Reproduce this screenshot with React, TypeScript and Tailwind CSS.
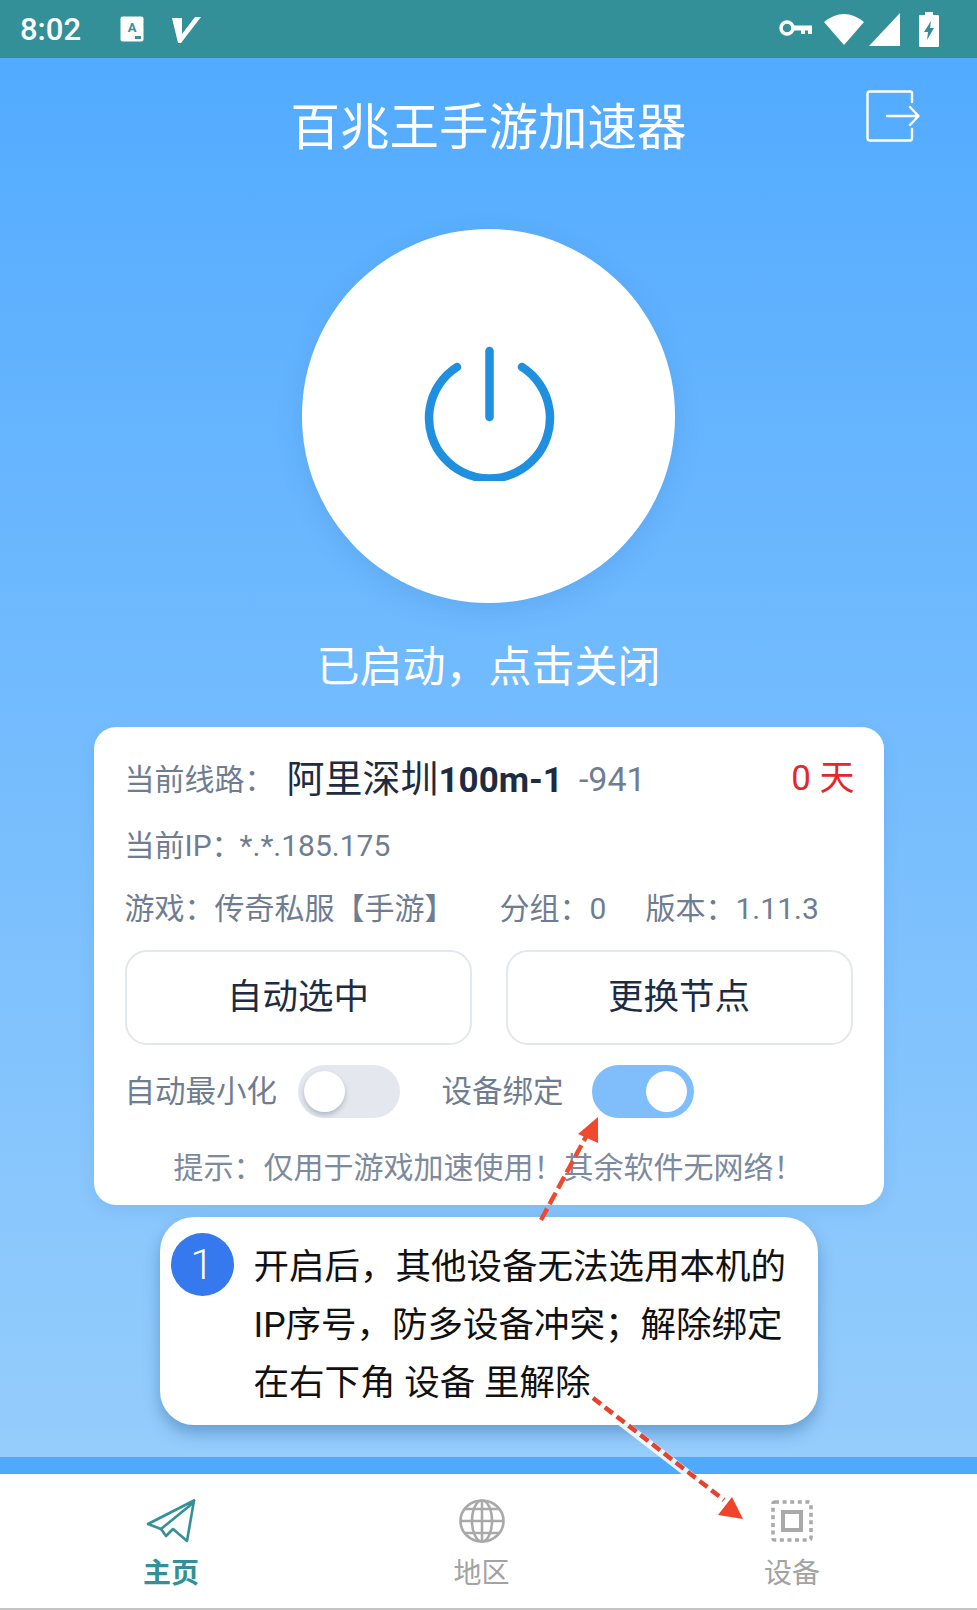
import React from "react";

const font = { fontFamily: '"Roboto","Noto Sans CJK SC",sans-serif' };

function Toggle({ on }: { on?: boolean }) {
  return (
    <div className={`flex items-center w-[102px] h-[53px] rounded-full px-[6px] ${on ? "bg-[#7fbdfb] justify-end pr-[7px]" : "bg-[#e4e7ee] justify-start"}`}>
      <div className={`w-[41px] h-[41px] rounded-full bg-white ${on ? "" : "shadow-[0_3px_5px_rgba(90,100,120,0.35)]"}`} />
    </div>
  );
}

function StatusBar() {
  return (
    <div className="relative flex items-center h-[58px] bg-[#338f98] text-white shrink-0">
      <span className="ml-[20px] w-[100px] text-[31px] font-medium leading-none tracking-[0px]" style={{ fontFamily: "Roboto,sans-serif" }}>8:02</span>
      <svg width="24" height="26" viewBox="0 0 24 26" className="ml-0">
        <rect x="0.5" y="0.5" width="23" height="25" rx="2" fill="#fff" />
        <text x="12" y="16" textAnchor="middle" fontSize="13" fontWeight="700" fill="#338f98" fontFamily="Roboto">A</text>
        <rect x="15" y="20" width="6" height="3" fill="#338f98" />
      </svg>
      <svg width="30" height="27" viewBox="0 0 30 27" className="ml-[27px]">
        <path d="M1 2 L11 2 L11 18 L24 1 L30 1 L10 27 L7 27 Z" fill="#fff" />
      </svg>
      <div className="flex-1" />
      <svg width="34" height="20" viewBox="0 0 34 20">
        <circle cx="8" cy="9" r="6" fill="none" stroke="#fff" strokeWidth="3.5" />
        <path d="M14 6.5 H33 V15 H29 V11.5 H26 V15 H22 V11.5 H14 Z" fill="#fff" />
      </svg>
      <svg width="42" height="32" viewBox="0 0 42 32" className="ml-[10px]">
        <path d="M1 9 Q21 -7 41 9 L21 32 Z" fill="#fff" />
      </svg>
      <svg width="32" height="33" viewBox="0 0 32 33" className="ml-[4px]">
        <path d="M31 0 V33 H0 Z" fill="#fff" />
      </svg>
      <svg width="20" height="35" viewBox="0 0 20 35" className="ml-[18px] mr-[38px]">
        <path d="M6 0 H14 V3 H19 Q20 3 20 4 V34 Q20 35 19 35 H1 Q0 35 0 34 V4 Q0 3 1 3 H6 Z" fill="#fff" />
        <path d="M12 9 L5 20 H9 L8 28 L15 16 H11 Z" fill="#338f98" />
      </svg>
    </div>
  );
}

function Arrows() {
  return (
    <svg className="absolute left-0 top-0 pointer-events-none" width="977" height="1610" viewBox="0 0 977 1610">
      <line x1="541" y1="1220" x2="588" y2="1133" stroke="#f0492f" strokeWidth="4.5" strokeDasharray="13 5" />
      <polygon points="598,1117 578,1134 598,1143" fill="#f0492f" />
      <line x1="590" y1="1398" x2="722" y2="1500" stroke="#fff" strokeWidth="8" strokeOpacity="0.85" />
      <line x1="593" y1="1398" x2="724" y2="1500" stroke="#e5432e" strokeWidth="4.5" strokeDasharray="10 5" />
      <polygon points="743,1519 732,1497 718,1515" fill="#f0442a" />
    </svg>
  );
}

export default function App() {
  return (
    <div className="relative w-[977px] h-[1610px] overflow-hidden flex flex-col bg-white" style={font}>
      <StatusBar />
      <main className="relative flex flex-col items-center h-[1399px] shrink-0 bg-gradient-to-b from-[#52abff] to-[#95cdfc]">
        <h1 className="mt-[40px] h-[60px] text-[49.5px] leading-[60px] font-normal text-white">百兆王手游加速器</h1>
        <svg className="absolute left-[866px] top-[32px]" width="54" height="52" viewBox="0 0 54 52" fill="none" stroke="#fff" strokeWidth="2.4" strokeLinecap="round" strokeLinejoin="round">
          <path d="M46 12 V3 Q46 1.5 44 1.5 H4 Q1.5 1.5 1.5 4 V48 Q1.5 50.5 4 50.5 H44 Q46 50.5 46 48 V39" />
          <path d="M21 26 H52 M44 17 L52.5 26 L44 35" />
        </svg>
        <div className="mt-[71px] flex items-center justify-center w-[373px] h-[374px] rounded-full bg-white shadow-[0_8px_26px_rgba(40,110,190,0.18)]">
          <svg width="140" height="136" viewBox="0 0 140 136" fill="none" stroke="#1f8fe0" strokeLinecap="round" strokeWidth="8.5" className="-mt-[6px]">
            <path d="M38 22 A60.5 60.5 0 1 0 103 22" />
            <path d="M70.5 6 V72" />
          </svg>
        </div>
        <div className="mt-[34px] h-[60px] text-[43px] leading-[60px] text-white">已启动，点击关闭</div>

        <section className="mt-[30px] w-[790px] h-[478px] rounded-[22px] bg-white px-[31px] pt-[30px] shadow-[0_6px_16px_rgba(40,110,190,0.12)] text-[#6f7d92] text-[30px]">
          <div className="flex items-center h-[44px] whitespace-nowrap">
            <span className="w-[162px]">当前线路：</span>
            <span className="text-[38px] text-[#1e2c42]">阿里深圳<span className="font-bold text-[35px]">100m-1</span></span>
            <span className="ml-[16px] text-[34px]">-941</span>
            <span className="ml-auto mr-[-2px] text-[35px] text-[#e5272a]">0 天</span>
          </div>
          <div className="flex items-center mt-[22px] h-[44px] whitespace-nowrap">当前IP：<span className="ml-[-2px]">*.*.185.175</span></div>
          <div className="flex items-center mt-[19px] h-[44px] whitespace-nowrap">
            <span className="w-[375px]">游戏：传奇私服【手游】</span>
            <span className="w-[146px]">分组：0</span>
            <span>版本：1.11.3</span>
          </div>
          <div className="flex justify-between mt-[20px]">
            <button className="w-[347px] h-[95px] rounded-[22px] border-2 border-[#e3e7ee] text-[35.5px] text-[#1e2c42]">自动选中</button>
            <button className="w-[347px] h-[95px] rounded-[22px] border-2 border-[#e3e7ee] text-[35.5px] text-[#1e2c42]">更换节点</button>
          </div>
          <div className="flex items-center mt-[20px] h-[53px] whitespace-nowrap">
            <span className="w-[173px] text-[30.5px]">自动最小化</span>
            <Toggle />
            <span className="ml-[42px] w-[150px] text-[30.5px]">设备绑定</span>
            <Toggle on />
          </div>
          <div className="flex items-center justify-center mt-[27px] h-[44px] whitespace-nowrap text-[30px] text-[#7d8a9e]">提示：仅用于游戏加速使用！其余软件无网络！</div>
        </section>

        <section className="mt-[12px] w-[658px] h-[208px] rounded-[34px] bg-white flex items-start pl-[11px] pt-[21px] gap-[20px] shadow-[0_8px_16px_rgba(20,70,130,0.35)]">
          <div className="-mt-[5px] flex items-center justify-center w-[63px] h-[63px] rounded-full bg-[#3678ee] text-[42px] font-light text-white shrink-0">1</div>
          <div className="text-[35.5px] leading-[58px] text-[#111] whitespace-nowrap">
            <div>开启后，其他设备无法选用本机的</div>
            <div>IP序号，防多设备冲突；解除绑定</div>
            <div>在右下角 设备 里解除</div>
          </div>
        </section>
      </main>
      <div className="h-[17px] bg-[#4fa9fd] shrink-0" />
      <nav className="flex justify-between flex-1 pl-[143px] pr-[157px] pt-[25px] border-b-2 border-[#c4c4c4] bg-white text-[28px]">
        <div className="flex flex-col items-center w-[56px]">
          <svg width="50" height="44" viewBox="0 0 50 44" fill="none" stroke="#338f98" strokeWidth="2.6" strokeLinejoin="round" strokeLinecap="round">
            <path d="M48 1.5 L2 25 L15 30 L47 4" />
            <path d="M48 1.5 L41 42 L27 30 L20 37 L15 30" />
          </svg>
          <span className="mt-[15px] leading-[32px] font-bold text-[#338f98]">主页</span>
        </div>
        <div className="flex flex-col items-center w-[56px]">
          <svg width="46" height="44" viewBox="0 0 46 44" fill="none" stroke="#a9a9a9" strokeWidth="2.6">
            <ellipse cx="23" cy="22" rx="21.5" ry="20.5" />
            <ellipse cx="23" cy="22" rx="10" ry="20.5" />
            <path d="M23 1.5 V42.5 M1.5 22 H44.5 M5 10 H41 M5 34 H41" />
          </svg>
          <span className="mt-[15px] leading-[32px] text-[#a3a3a3]">地区</span>
        </div>
        <div className="flex flex-col items-center w-[56px]">
          <svg width="42" height="44" viewBox="0 0 42 44" fill="none" stroke="#a9a9a9">
            <rect x="2" y="3" width="38" height="38" rx="2" strokeWidth="3.5" strokeDasharray="4 3.6" />
            <rect x="12" y="13" width="18" height="18" strokeWidth="4" />
          </svg>
          <span className="mt-[15px] leading-[32px] text-[#a3a3a3]">设备</span>
        </div>
      </nav>
      <Arrows />
    </div>
  );
}
